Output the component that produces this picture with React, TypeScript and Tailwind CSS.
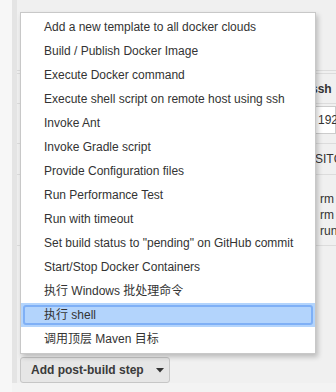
import React from "react";

const items = [
  "Add a new template to all docker clouds",
  "Build / Publish Docker Image",
  "Execute Docker command",
  "Execute shell script on remote host using ssh",
  "Invoke Ant",
  "Invoke Gradle script",
  "Provide Configuration files",
  "Run Performance Test",
  "Run with timeout",
  'Set build status to "pending" on GitHub commit',
  "Start/Stop Docker Containers",
  "执行 Windows 批处理命令",
  "执行 shell",
  "调用顶层 Maven 目标",
];

const font = { fontFamily: '"Liberation Sans", Arial, "Noto Sans CJK SC", sans-serif' };

export default function App() {
  const active = 12;

  return (
    <div className="relative w-[336px] h-[392px] overflow-hidden bg-[#f3f3f3] flex text-[12px] text-[#333]" style={font}>
      {/* left gutter */}
      <div className="w-[12px] shrink-0 bg-[#f7f7f7]" />
      <div className="w-[5px] shrink-0 h-[383px] bg-[#e4e4e4]" />

      {/* page content behind the menu */}
      <div className="relative flex-1 min-w-0 h-[383px] bg-[#f0f0f0] flex flex-col overflow-hidden">
        <div className="mt-[70px] border-t border-[#dcdcdc]" />
        <div className="mt-[2px] border-t border-[#dcdcdc]" />
        <div className="h-[29px] flex items-center pl-[294px] font-bold whitespace-nowrap">ssh</div>
        <div className="border-t border-[#dcdcdc]" />
        <div className="mt-[2px] ml-[296px] h-[28px] bg-white border border-[#ccc] flex items-center pl-[4px] whitespace-nowrap">192.168</div>
        <div className="mt-[9px] border-t border-[#dcdcdc]" />
        <div className="h-[30px] flex items-center pl-[298px] whitespace-nowrap">SITC</div>
        <div className="border-t border-[#dcdcdc]" />
        <div className="mt-[16px] pl-[303px] leading-[16px] flex flex-col whitespace-nowrap">
          <span>rm</span>
          <span>rm</span>
          <span>run</span>
        </div>
        <div className="mt-[6px] border-t border-[#dcdcdc]" />

        <div className="mt-auto ml-[3px] w-[150px] h-[26px] rounded-[3px] border border-[#c6c6c6] bg-[#e6e6e6] flex items-center pl-[10px] gap-[12px] whitespace-nowrap font-bold text-[#3a3a3a]">
          <span>Add post-build step</span>
          <svg width="8" height="5" viewBox="0 0 8 5">
            <path d="M0 0 L8 0 L4 4.5 Z" fill="#333" />
          </svg>
        </div>
      </div>

      {/* dropdown menu */}
      <div className="absolute left-[20px] top-[12px] w-[296px] bg-white border border-[#c8c8c8] py-[2px] shadow-[2px_3px_5px_rgba(0,0,0,0.22)]">
        {items.map((label, i) =>
          i === active ? (
            <div key={label} className="h-[24px] bg-[#b3d4fc] p-[2px]">
              <div className="h-full rounded-[3px] border-2 border-[#7fb0f6] flex items-center pl-[19px] whitespace-nowrap">
                {label}
              </div>
            </div>
          ) : (
            <div key={label} className="h-[24px] flex items-center pl-[23px] whitespace-nowrap">
              {label}
            </div>
          )
        )}
      </div>
    </div>
  );
}
